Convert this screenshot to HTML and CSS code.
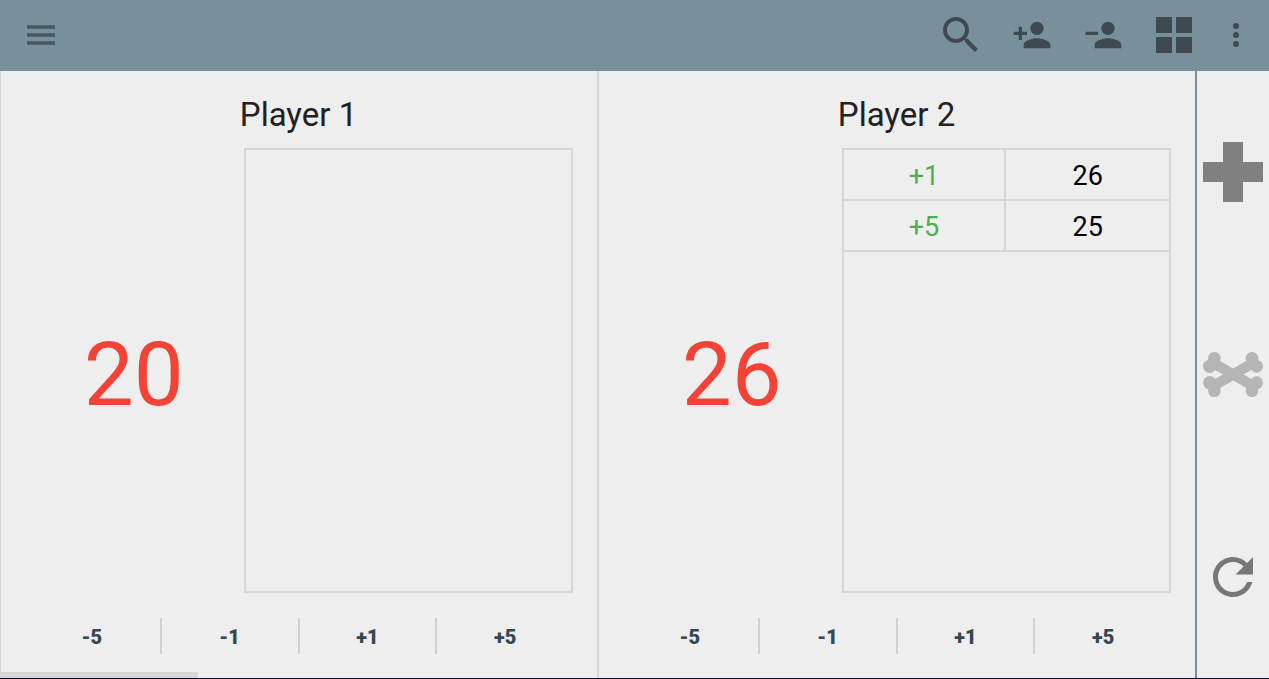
FILE: index.html
```html
<!DOCTYPE html>
<html lang="en">
<head>
<meta charset="utf-8">
<meta name="viewport" content="width=device-width, initial-scale=1">
<title>Life Counter</title>
<link rel="stylesheet" href="styles.css">
</head>
<body>
<header class="toolbar">
  <button class="tool menu" type="button" aria-label="Menu">
    <svg width="28" height="20" viewBox="0 0 28 20"><path d="M0 .3h28v3.400H0zM0 8.300h28v3.400H0zM0 16.300h28v3.400H0z"/></svg>
  </button>
  <button class="tool" type="button" aria-label="Search">
    <svg width="48" height="48" viewBox="0 0 24 24"><path d="M15.500 14h-.79l-.28-.27C15.410 12.590 16 11.110 16 9.500 16 5.910 13.090 3 9.500 3S3 5.910 3 9.500 5.910 16 9.500 16c1.610 0 3.090-.59 4.230-1.570l.27.28v.79l5 4.990L20.490 19l-4.990-5zm-6 0C7.010 14 5 11.990 5 9.500S7.010 5 9.500 5 14 7.010 14 9.500 11.990 14 9.500 14z"/></svg>
  </button>
  <button class="tool" type="button" aria-label="Add player">
    <svg width="40" height="40" viewBox="0 0 24 24"><path d="M15 12c2.210 0 4-1.790 4-4s-1.790-4-4-4-4 1.790-4 4 1.790 4 4 4zm-9-2V7H4v3H1v2h3v3h2v-3h3v-2H6zm9 4c-2.670 0-8 1.340-8 4v2h16v-2c0-2.660-5.330-4-8-4z"/></svg>
  </button>
  <button class="tool" type="button" aria-label="Remove player">
    <svg width="40" height="40" viewBox="0 0 24 24"><path d="M15 12c2.210 0 4-1.790 4-4s-1.790-4-4-4-4 1.790-4 4 1.790 4 4 4zM1.500 10v2H9v-2zM15 14c-2.670 0-8 1.340-8 4v2h16v-2c0-2.660-5.330-4-8-4z"/></svg>
  </button>
  <button class="tool" type="button" aria-label="Layout">
    <svg width="36" height="36" viewBox="0 0 36 36"><path d="M0 0h16v16H0zM20 0h16v16H20zM0 20h16v16H0zM20 20h16v16H20z"/></svg>
  </button>
  <button class="tool more" type="button" aria-label="More options">
    <svg width="6" height="24" viewBox="0 0 6 24"><circle cx="3" cy="3" r="3"/><circle cx="3" cy="12" r="3"/><circle cx="3" cy="21" r="3"/></svg>
  </button>
</header>
<div class="content">
  <main class="players">
    <section class="player">
      <h2 class="name">Player 1</h2>
      <div class="board">
        <div class="score">20</div>
        <div class="history"></div>
      </div>
      <div class="steps">
        <button class="step" type="button">-5</button>
        <button class="step" type="button">-1</button>
        <button class="step" type="button">+1</button>
        <button class="step" type="button">+5</button>
      </div>
    </section>
    <section class="player">
      <h2 class="name">Player 2</h2>
      <div class="board">
        <div class="score">26</div>
        <div class="history">
          <table class="log">
            <tbody>
              <tr><td class="change">+1</td><td>26</td></tr>
              <tr><td class="change">+5</td><td>25</td></tr>
            </tbody>
          </table>
        </div>
      </div>
      <div class="steps">
        <button class="step" type="button">-5</button>
        <button class="step" type="button">-1</button>
        <button class="step" type="button">+1</button>
        <button class="step" type="button">+5</button>
      </div>
    </section>
    <div class="scrollbar"></div>
  </main>
  <aside class="side">
    <button class="mode" type="button" aria-label="Life">
      <svg width="60" height="60" viewBox="0 0 60 60"><path fill="#808080" d="M20 0h20v20h20v20H40v20H20V40H0V20h20z"/></svg>
    </button>
    <button class="mode" type="button" aria-label="Poison">
      <svg width="60" height="45" viewBox="0 0 180 135"><g fill="#b5b5b5"><circle cx="34" cy="19" r="19"/><circle cx="20" cy="43" r="20"/><circle cx="147" cy="19" r="19"/><circle cx="161" cy="43" r="19"/><circle cx="20" cy="92" r="20"/><circle cx="34" cy="116" r="19"/><circle cx="161" cy="92" r="19"/><circle cx="147" cy="116" r="19"/></g><path stroke="#b5b5b5" stroke-width="31" d="M29 32l123 71M152 32L29 103"/></svg>
    </button>
    <button class="mode" type="button" aria-label="Reset">
      <svg width="60" height="60" viewBox="0 0 24 24"><path fill="#777" d="M17.650 6.350C16.200 4.900 14.210 4 12 4c-4.420 0-7.990 3.580-7.990 8s3.570 8 7.990 8c3.730 0 6.840-2.550 7.730-6h-2.080c-.82 2.330-3.040 4-5.650 4-3.310 0-6-2.690-6-6s2.690-6 6-6c1.660 0 3.140.69 4.220 1.780L13 11h7V4l-2.350 2.350z"/></svg>
    </button>
  </aside>
</div>
</body>
</html>
```
FILE: styles.css
```css
* {
  box-sizing: border-box;
}

body {
  margin: 0;
  min-height: 100vh;
  display: flex;
  flex-direction: column;
  background: #eee;
  border-bottom: 1px solid #0b0b35;
  font-family: Roboto, sans-serif;
}

button {
  padding: 0;
  border: 0;
  background: none;
  font-family: inherit;
}

svg {
  display: block;
}

.toolbar {
  display: flex;
  height: 71px;
  padding: 0 7px 0 5px;
  background: #78909c;
}

.tool {
  display: flex;
  align-items: center;
  justify-content: center;
  width: 71px;
  padding-bottom: 1px;
  fill: #3e4a50;
}

.menu {
  margin-right: auto;
  fill: #475861;
}

.more {
  width: 53px;
}

.content {
  flex: 1;
  display: flex;
}

.players {
  position: relative;
  flex: 1;
  display: flex;
}

.player {
  flex: 1;
  display: flex;
  flex-direction: column;
  padding: 0 24px 24px 23px;
  border-left: 2px solid #d6d6d6;
}

.player:first-child {
  border-left-width: 1px;
}

.name {
  margin: 0;
  padding-top: 23px;
  height: 77px;
  font-size: 33px;
  font-weight: 400;
  line-height: 42px;
  text-align: center;
  color: #212121;
}

.board {
  flex: 1;
  display: grid;
  grid-template-columns: 2fr 3fr;
}

.score {
  display: flex;
  align-items: center;
  justify-content: center;
  padding-top: 8px;
  font-size: 89px;
  color: #f44336;
}

.history {
  border: 2px solid #d6d6d6;
}

.log {
  width: 100%;
  table-layout: fixed;
  border-collapse: separate;
  border-spacing: 0;
}

.log td {
  height: 51px;
  padding: 2px 0 0;
  border-bottom: 2px solid #d6d6d6;
  font-size: 27px;
  line-height: 32px;
  text-align: center;
  color: #000;
}

.log .change {
  border-right: 2px solid #d6d6d6;
  color: #4caf50;
}

.steps {
  display: flex;
  margin-top: 25px;
}

.step {
  flex: 1;
  height: 36px;
  padding-top: 2px;
  font-size: 20px;
  font-weight: 900;
  color: #37474f;
}

.step + .step {
  border-left: 2px solid #d0d0d0;
}

.scrollbar {
  position: absolute;
  left: 0;
  bottom: 0;
  width: 16.6%;
  height: 6px;
  background: #d8d8d8;
}

.side {
  display: flex;
  flex-direction: column;
  width: 74px;
  border-left: 2px solid #78909c;
}

.mode {
  flex: 1;
  display: flex;
  align-items: center;
  justify-content: center;
}
```
